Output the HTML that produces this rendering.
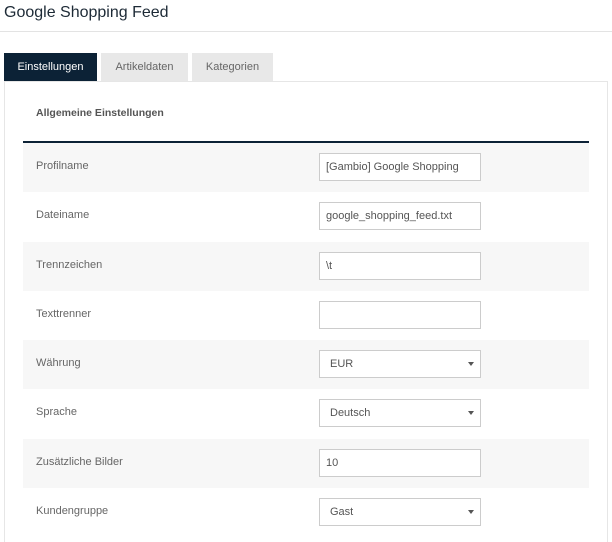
<!DOCTYPE html>
<html><head><style>
body{margin:0;width:612px;height:532px;overflow:hidden;background:#fff;font-family:"Liberation Sans",sans-serif;position:relative}
.t{position:absolute;left:4px;top:4px;font-size:16px;color:#1d2a36}
.hr{position:absolute;left:0;top:31px;width:612px;height:1px;background:#e3e3e3}
.tab{position:absolute;top:53px;height:28px;line-height:28px;text-align:center;font-size:11px;background:#e8e8e8;color:#666}
.panel{position:absolute;left:4px;top:81px;width:602px;height:460px;border-left:1px solid #e6e6e6;border-right:1px solid #e6e6e6;border-top:1px solid #e6e6e6}
.h{position:absolute;left:36px;top:107px;font-size:10.5px;font-weight:bold;color:#555}
.dl{position:absolute;left:23px;top:141px;width:566px;height:2px;background:#0c2236}
.row{position:absolute;left:23px;width:566px;height:49px}
.row.g{background:#f7f7f7}
.lab{position:absolute;left:13px;top:17px;font-size:11px;color:#666}
.in{position:absolute;left:296px;top:10px;height:26px;border:1px solid #ccc;background:#fff;font-size:11px;color:#555;line-height:26px;padding-left:6px;width:154px}
.sel{padding-left:10px;width:150px}
.ar{position:absolute;right:6px;top:11px;width:0;height:0;border-left:3.5px solid transparent;border-right:3.5px solid transparent;border-top:4px solid #555}
</style></head><body>
<div class="t">Google Shopping Feed</div>
<div class="hr"></div>
<div class="panel"></div>
<div class="tab" style="left:4px;width:93px;background:#0c2236;color:#fff">Einstellungen</div>
<div class="tab" style="left:101px;width:87px">Artikeldaten</div>
<div class="tab" style="left:192px;width:81px">Kategorien</div>
<div class="h">Allgemeine Einstellungen</div>
<div class="dl"></div>
<div class="row g" style="top:143px"><div class="lab">Profilname</div><div class="in">[Gambio] Google Shopping</div></div>
<div class="row" style="top:192px;height:50px"><div class="lab">Dateiname</div><div class="in">google_shopping_feed.txt</div></div>
<div class="row g" style="top:242px"><div class="lab">Trennzeichen</div><div class="in">\t</div></div>
<div class="row" style="top:291px;height:50px"><div class="lab">Texttrenner</div><div class="in"></div></div>
<div class="row g" style="top:340px"><div class="lab">Währung</div><div class="in sel">EUR<div class="ar"></div></div></div>
<div class="row" style="top:389px;height:50px"><div class="lab">Sprache</div><div class="in sel">Deutsch<div class="ar"></div></div></div>
<div class="row g" style="top:439px"><div class="lab">Zusätzliche Bilder</div><div class="in">10</div></div>
<div class="row" style="top:488px"><div class="lab">Kundengruppe</div><div class="in sel">Gast<div class="ar"></div></div></div>
</body></html>
